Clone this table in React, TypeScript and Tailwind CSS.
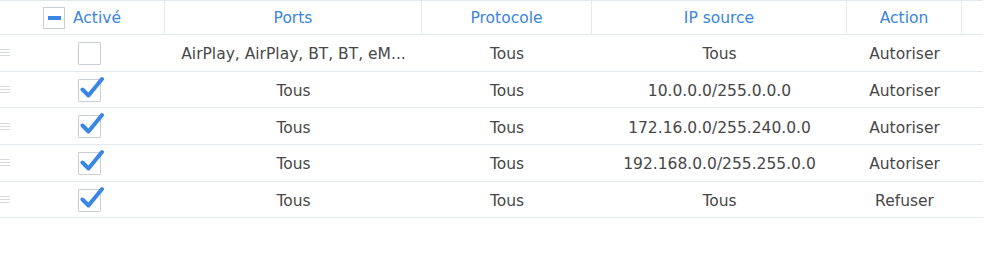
import React from "react";

type Rule = {
  enabled: boolean;
  ports: string;
  protocol: string;
  source: string;
  action: string;
};

const rules: Rule[] = [
  { enabled: false, ports: "AirPlay, AirPlay, BT, BT, eM...", protocol: "Tous", source: "Tous", action: "Autoriser" },
  { enabled: true, ports: "Tous", protocol: "Tous", source: "10.0.0.0/255.0.0.0", action: "Autoriser" },
  { enabled: true, ports: "Tous", protocol: "Tous", source: "172.16.0.0/255.240.0.0", action: "Autoriser" },
  { enabled: true, ports: "Tous", protocol: "Tous", source: "192.168.0.0/255.255.0.0", action: "Autoriser" },
  { enabled: true, ports: "Tous", protocol: "Tous", source: "Tous", action: "Refuser" },
];

const Check = ({ checked }: { checked: boolean }) => (
  <div className="relative w-[23px] h-[23px] border border-[#c9ced6] bg-white rounded-[1px]">
    {checked && (
      <svg
        className="absolute left-[1px] top-[-5px]"
        width="25"
        height="26"
        viewBox="0 0 25 26"
      >
        <path
          d="M2.5 14.5 L8.5 20.5 L22 4"
          fill="none"
          stroke="#3a86e4"
          strokeWidth="4"
          strokeLinecap="round"
          strokeLinejoin="round"
        />
      </svg>
    )}
  </div>
);

const Handle = () => (
  <div className="flex flex-col gap-[2px] w-[10px]">
    <div className="h-px bg-[#d6d9de]" />
    <div className="h-px bg-[#d6d9de]" />
    <div className="h-px bg-[#d6d9de]" />
  </div>
);

export default function App() {
  return (
    <div
      className="w-[1000px] h-[275px] bg-white text-[15.5px] overflow-hidden"
      style={{ fontFamily: '"DejaVu Sans", Verdana, sans-serif' }}
    >
      <div className="w-[983px]">
        {/* header */}
        <div className="flex h-[35px] border-t border-b border-[#e4e9f0] text-[#3a85e0]">
          <div className="w-[165px] flex items-center justify-center gap-[8px] border-r border-[#e4e9f0]">
            <div className="w-[22px] h-[22px] border border-[#c9ced6] flex items-center justify-center">
              <div className="w-[13px] h-[4px] bg-[#3a86e4]" />
            </div>
            <span className="pt-[2px]">Activé</span>
          </div>
          <div className="w-[257px] flex items-center justify-center pt-[2px] border-r border-[#e4e9f0]">
            Ports
          </div>
          <div className="w-[170px] flex items-center justify-center pt-[2px] border-r border-[#e4e9f0]">
            Protocole
          </div>
          <div className="w-[255px] flex items-center justify-center pt-[2px] border-r border-[#e4e9f0]">
            IP source
          </div>
          <div className="w-[115px] flex items-center justify-center pt-[2px] border-r border-[#e4e9f0]">
            Action
          </div>
          <div className="flex-1" />
        </div>
        {/* rows */}
        {rules.map((r, i) => (
          <div
            key={i}
            className="flex items-center h-[36.7px] border-b border-[#e4e9f0] text-[#474747]"
          >
            <div className="w-[165px] flex items-center">
              <Handle />
              <div className="flex-1 flex justify-center pl-[3px] pt-[1px]">
                <Check checked={r.enabled} />
              </div>
            </div>
            <div className="w-[257px] text-center whitespace-nowrap pt-[4px]">{r.ports}</div>
            <div className="w-[170px] text-center pt-[4px]">{r.protocol}</div>
            <div className="w-[255px] text-center pt-[4px]">{r.source}</div>
            <div className="w-[115px] text-center pt-[4px]">{r.action}</div>
            <div className="flex-1" />
          </div>
        ))}
      </div>
    </div>
  );
}
